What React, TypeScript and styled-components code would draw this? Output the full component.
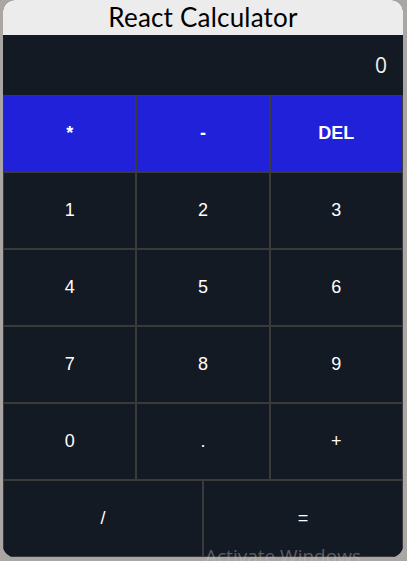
import React from "react";
import styled, { createGlobalStyle } from "styled-components";

const GlobalStyle = createGlobalStyle`
  html, body {
    margin: 0;
    padding: 0;
    background: #a9a6a4;
    font-family: "Liberation Sans", Arial, sans-serif;
  }
  * { box-sizing: border-box; }
`;

const Page = styled.div`
  position: relative;
  width: 407px;
  height: 561px;
  overflow: hidden;
  padding-left: 3px;
`;

const Card = styled.div`
  width: 400px;
  border-radius: 12px;
  overflow: hidden;
  background: #141a24;
`;

const Title = styled.h1`
  margin: 0;
  height: 35px;
  background: #ececec;
  color: #000;
  font-family: "Lato", "Open Sans", sans-serif;
  font-weight: 400;
  font-size: 26px;
  line-height: 35px;
  text-align: center;
  letter-spacing: 0.2px;
`;

const Display = styled.div`
  height: 60px;
  background: #141a24;
  color: #f2f2f2;
  font-family: "Open Sans", "Noto Sans", sans-serif;
  font-size: 21px;
  display: flex;
  align-items: center;
  justify-content: flex-end;
  padding: 0 16px 0 0;
`;

const Grid = styled.div<{ $cols: number }>`
  display: grid;
  grid-template-columns: repeat(${(p) => p.$cols}, 1fr);
  grid-auto-rows: 77px;
`;

const Key = styled.button<{ $op?: boolean }>`
  border: 1px solid #3a3a3a;
  margin: 0;
  padding: 0;
  background: ${(p) => (p.$op ? "#2121d9" : "#141a24")};
  color: #ffffff;
  font-family: "Liberation Sans", Arial, sans-serif;
  font-size: 18px;
  font-weight: ${(p) => (p.$op ? 700 : 400)};
  display: flex;
  align-items: center;
  justify-content: center;
  cursor: pointer;
`;

const Watermark = styled.div`
  position: absolute;
  left: 205px;
  top: 543px;
  color: rgba(200, 200, 205, 0.4);
  font-family: "Open Sans", "Noto Sans", sans-serif;
  font-size: 19px;
  white-space: nowrap;
  pointer-events: none;
`;

const rows = [
  ["1", "2", "3"],
  ["4", "5", "6"],
  ["7", "8", "9"],
  ["0", ".", "+"],
];

export default function App() {
  return (
    <>
      <GlobalStyle />
      <Page>
        <Card>
          <Title>React Calculator</Title>
          <Display>0</Display>
          <Grid $cols={3}>
            <Key $op>*</Key>
            <Key $op>-</Key>
            <Key $op>DEL</Key>
            {rows.flat().map((k) => (
              <Key key={k}>{k}</Key>
            ))}
          </Grid>
          <Grid $cols={2}>
            <Key>/</Key>
            <Key>=</Key>
          </Grid>
        </Card>
        <Watermark>Activate Windows</Watermark>
      </Page>
    </>
  );
}
